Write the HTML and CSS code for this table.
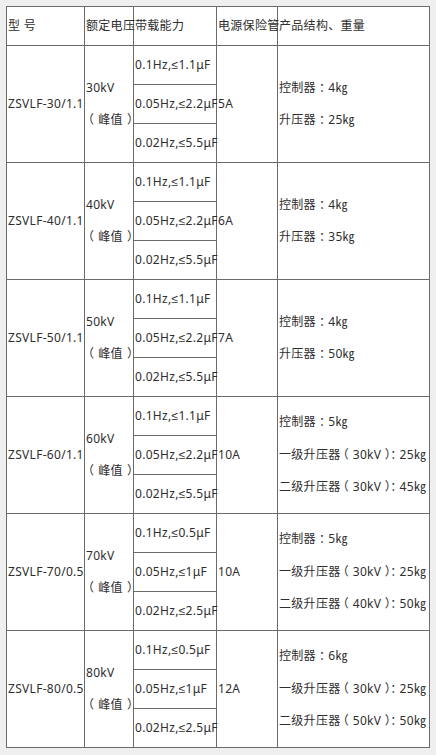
FILE: index.html
```html
<!DOCTYPE html>
<html lang="zh">
<head>
<meta charset="utf-8">
<title>参数表</title>
<link rel="stylesheet" href="styles.css">
</head>
<body>
<table class="spec">
  <colgroup>
    <col class="c1"><col class="c2"><col class="c3"><col class="c4"><col class="c5">
  </colgroup>
  <tr class="head">
    <td>型 号</td><td>额定电压</td><td>带载能力</td><td>电源保险管</td><td>产品结构、重量</td>
  </tr>

  <tr>
    <td rowspan="3">ZSVLF-30/1.1</td>
    <td rowspan="3" class="multi"><div>30kV</div><div><span class="op">（</span>峰值<span class="cp">）</span></div></td>
    <td class="load">0.1Hz,≤1.1μF</td>
    <td rowspan="3">5A</td>
    <td rowspan="3" class="multi"><div>控制器<span class="co">：</span>4㎏</div><div>升压器<span class="co">：</span>25㎏</div></td>
  </tr>
  <tr><td class="load">0.05Hz,≤2.2μF</td></tr>
  <tr><td class="load">0.02Hz,≤5.5μF</td></tr>

  <tr>
    <td rowspan="3">ZSVLF-40/1.1</td>
    <td rowspan="3" class="multi"><div>40kV</div><div><span class="op">（</span>峰值<span class="cp">）</span></div></td>
    <td class="load">0.1Hz,≤1.1μF</td>
    <td rowspan="3">6A</td>
    <td rowspan="3" class="multi"><div>控制器<span class="co">：</span>4㎏</div><div>升压器<span class="co">：</span>35㎏</div></td>
  </tr>
  <tr><td class="load">0.05Hz,≤2.2μF</td></tr>
  <tr><td class="load">0.02Hz,≤5.5μF</td></tr>

  <tr>
    <td rowspan="3">ZSVLF-50/1.1</td>
    <td rowspan="3" class="multi"><div>50kV</div><div><span class="op">（</span>峰值<span class="cp">）</span></div></td>
    <td class="load">0.1Hz,≤1.1μF</td>
    <td rowspan="3">7A</td>
    <td rowspan="3" class="multi"><div>控制器<span class="co">：</span>4㎏</div><div>升压器<span class="co">：</span>50㎏</div></td>
  </tr>
  <tr><td class="load">0.05Hz,≤2.2μF</td></tr>
  <tr><td class="load">0.02Hz,≤5.5μF</td></tr>

  <tr>
    <td rowspan="3">ZSVLF-60/1.1</td>
    <td rowspan="3" class="multi"><div>60kV</div><div><span class="op">（</span>峰值<span class="cp">）</span></div></td>
    <td class="load">0.1Hz,≤1.1μF</td>
    <td rowspan="3">10A</td>
    <td rowspan="3" class="multi"><div>控制器<span class="co">：</span>5㎏</div><div>一级升压<span class="sq">器</span><span class="op2">（</span>30kV<span class="cp2">）</span><span class="co">：</span>25㎏</div><div>二级升压<span class="sq">器</span><span class="op2">（</span>30kV<span class="cp2">）</span><span class="co">：</span>45㎏</div></td>
  </tr>
  <tr><td class="load">0.05Hz,≤2.2μF</td></tr>
  <tr><td class="load">0.02Hz,≤5.5μF</td></tr>

  <tr>
    <td rowspan="3">ZSVLF-70/0.5</td>
    <td rowspan="3" class="multi"><div>70kV</div><div><span class="op">（</span>峰值<span class="cp">）</span></div></td>
    <td class="load">0.1Hz,≤0.5μF</td>
    <td rowspan="3">10A</td>
    <td rowspan="3" class="multi"><div>控制器<span class="co">：</span>5㎏</div><div>一级升压<span class="sq">器</span><span class="op2">（</span>30kV<span class="cp2">）</span><span class="co">：</span>25㎏</div><div>二级升压<span class="sq">器</span><span class="op2">（</span>40kV<span class="cp2">）</span><span class="co">：</span>50㎏</div></td>
  </tr>
  <tr><td class="load">0.05Hz,≤1μF</td></tr>
  <tr><td class="load">0.02Hz,≤2.5μF</td></tr>

  <tr>
    <td rowspan="3">ZSVLF-80/0.5</td>
    <td rowspan="3" class="multi"><div>80kV</div><div><span class="op">（</span>峰值<span class="cp">）</span></div></td>
    <td class="load">0.1Hz,≤0.5μF</td>
    <td rowspan="3">12A</td>
    <td rowspan="3" class="multi"><div>控制器<span class="co">：</span>6㎏</div><div>一级升压<span class="sq">器</span><span class="op2">（</span>30kV<span class="cp2">）</span><span class="co">：</span>25㎏</div><div>二级升压<span class="sq">器</span><span class="op2">（</span>50kV<span class="cp2">）</span><span class="co">：</span>50㎏</div></td>
  </tr>
  <tr><td class="load">0.05Hz,≤1μF</td></tr>
  <tr><td class="load">0.02Hz,≤2.5μF</td></tr>
</table>
</body>
</html>
```

FILE: styles.css
```css
html, body {
  background: #efefef;
}
body {
  margin: 6px;
  font-family: "Noto Sans", "Liberation Sans", "Noto Sans CJK SC", sans-serif;
  font-size: 12px;
  line-height: 1.2;
  letter-spacing: 0.3px;
  color: #2e2e2e;
}
.spec {
  border-collapse: collapse;
  table-layout: fixed;
  width: 424px;
  background: #fff;
}
.c1 { width: 78px; }
.c2 { width: 49px; }
.c3 { width: 83px; }
.c4 { width: 61px; }
.c5 { width: 152px; }
.spec td {
  border: 1px solid #6b6b6b;
  padding: 0 0 0 1px;
  white-space: nowrap;
  vertical-align: middle;
  overflow: visible;
}
.head td {
  height: 38px;
}
.spec td.load {
  height: 38px;
}
.multi div {
  line-height: 32.5px;
}
/* full-width punctuation: centre the ink within its em box */
.op {
  margin: 0 4px 0 -4px;
}
.cp {
  margin: 0 -4px 0 4px;
}
.co {
  margin-left: 3px;
  letter-spacing: -2.7px;
}
.sq {
  letter-spacing: -3.5px;
}
.op2 {
  letter-spacing: 4px;
}
.cp2 {
  margin-left: 3.5px;
  letter-spacing: -3.5px;
}
```
